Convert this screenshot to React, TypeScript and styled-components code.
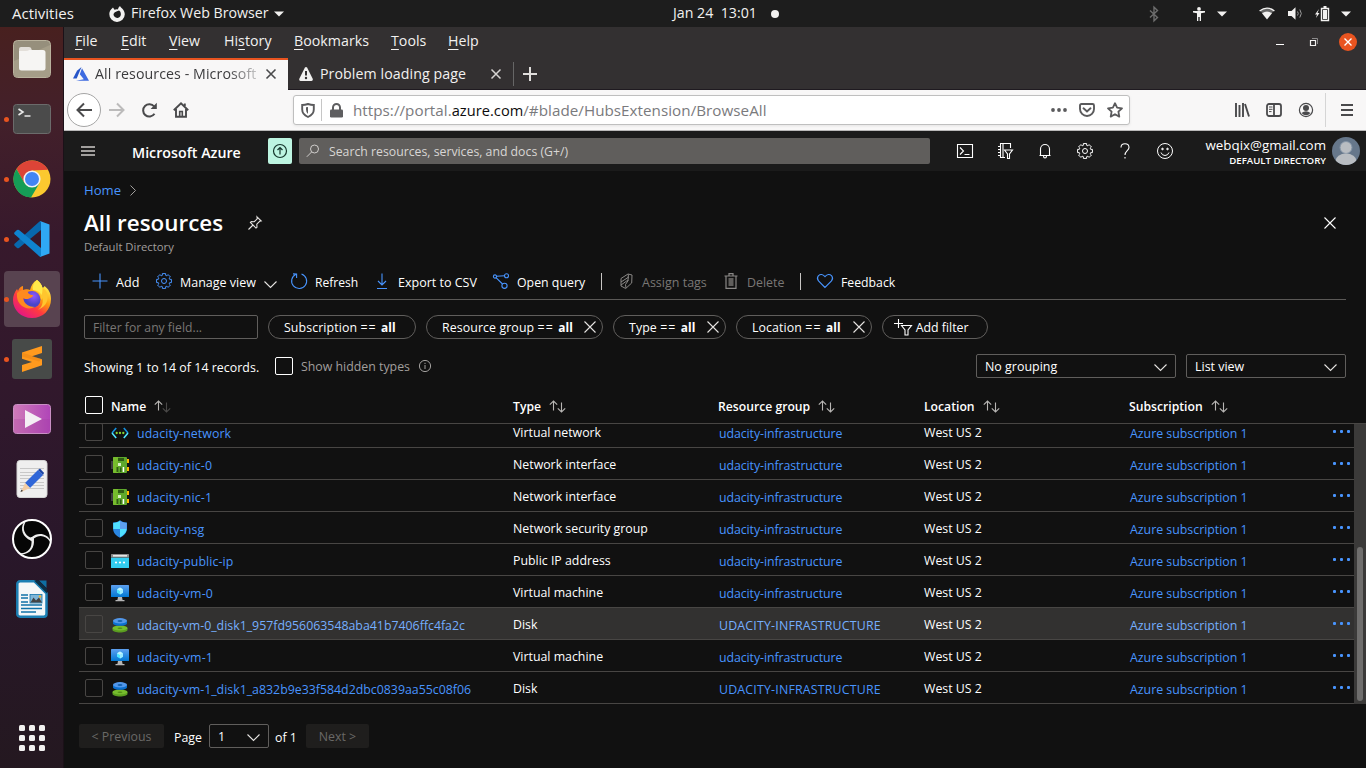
import React from 'react';
import styled, { createGlobalStyle, css } from 'styled-components';

const GlobalStyle = createGlobalStyle`
  * { box-sizing: border-box; }
  body { margin: 0; background: #111; overflow: hidden; }
  svg { display: block; flex: none; overflow: visible; }
`;

const ui = '"Open Sans", "Noto Sans", sans-serif';

const Screen = styled.div`
  width: 1366px; height: 768px; display: flex; flex-direction: column;
  font-family: ${ui}; font-size: 14.2px; color: #f2f1f0; white-space: pre; overflow: hidden;
`;

/* ---------- desktop top bar ---------- */
const TopBar = styled.header`
  height: 27px; flex: none; background: #1d1d1d; display: flex; align-items: center;
`;
const TopLabel = styled.span<{ $left: number; $w: number; $size?: number }>`
  margin-left: ${p => p.$left}px; width: ${p => p.$w}px; font-size: ${p => p.$size ?? 14.2}px;
  line-height: 26px; flex: none; padding-bottom: 1px;
`;
const StatusIcons = styled.div`
  margin-left: auto; display: flex; align-items: center; padding-right: 15px;
`;
const Gap = styled.i<{ $w: number }>`width: ${p => p.$w}px; flex: none;`;
const Dot = styled.i`width: 8px; height: 8px; border-radius: 50%; background: #f2f1f0; margin-left: 14px;`;

const Body = styled.div`flex: 1; display: flex; min-height: 0;`;

/* ---------- dock ---------- */
const Dock = styled.nav`
  width: 64px; flex: none; display: flex; flex-direction: column; padding-top: 2px;
  background: linear-gradient(180deg, #48201f 0%, #43202a 12%, #37192c 28%, #30182c 52%, #29172a 70%, #241820 100%);
  border-right: 1px solid #1b1118;
`;
const Slot = styled.div<{ $active?: boolean }>`
  height: 60px; display: grid; grid-template-columns: 56px; padding: 2px 0 2px 4px; flex: none;
  & > div {
    border-radius: 4px; height: 56px; display: grid; grid-template-columns: 5px 46px; align-items: center;
    ${p => p.$active && css`background: #584350;`}
  }
  svg { justify-self: center; }
`;
const RunDot = styled.i<{ $on?: boolean }>`
  width: 5px; height: 5px; border-radius: 50%; background: ${p => (p.$on ? '#e95420' : 'transparent')};
`;
const AppsButton = styled.div`
  margin: auto 0 17px 19px; display: grid; grid-template-columns: repeat(3, 6px); gap: 4px;
  i { height: 6px; border-radius: 1.5px; background: #f2f1f0; }
`;

/* ---------- browser window ---------- */
const Window = styled.main`flex: 1; min-width: 0; display: flex; flex-direction: column; background: #111;`;
const MenuBar = styled.div`
  height: 31px; flex: none; background: #333031; display: flex; padding: 0 9px 0 11px; line-height: 28px;
`;
const Menu = styled.span<{ $w: number }>`
  width: ${p => p.$w}px; letter-spacing: .03px;
  u { text-underline-offset: 3px; text-decoration-thickness: 1px; }
`;
const WindowButtons = styled.div`margin-left: auto; height: 30px; display: flex; align-items: center;`;
const TabStrip = styled.div`
  height: 32px; flex: none; display: flex; background: #333031; border-bottom: 1px solid #1f1a20;
`;
const Tab = styled.div<{ $active?: boolean }>`
  width: ${p => (p.$active ? 224 : 226)}px; height: 32px; display: flex; align-items: center;
  padding: 0 ${p => (p.$active ? 12 : 13)}px 0 ${p => (p.$active ? 9 : 11)}px; color: #f2f1f0;
  ${p => p.$active && css`background: #f8f7f7; color: #3b3b3d; border-top: 2px solid #e95420; padding-bottom: 2px;`}
`;
const TabTitle = styled.span<{ $fade?: boolean }>`
  flex: 1; margin-left: ${p => (p.$fade ? 6 : 7)}px; overflow: hidden; line-height: 22px; letter-spacing: .08px;
  ${p => p.$fade && css`-webkit-mask-image: linear-gradient(90deg, #000 132px, rgba(0,0,0,.25) 162px);
    mask-image: linear-gradient(90deg, #000 132px, rgba(0,0,0,.25) 162px);`}
`;
const NewTab = styled.div`
  display: flex; align-items: center; padding-left: 9px; margin: 4px 0 3px -1px; border-left: 1px solid #666;
`;
const NavBar = styled.div`
  height: 41px; flex: none; background: #f8f7f7; border-bottom: 1px solid #b9b8b8;
  display: flex; align-items: center; padding-left: 3px;
`;
const BackButton = styled.div`
  width: 34px; height: 34px; border: 1px solid #a5a5a5; border-radius: 50%; background: #fff;
  display: grid; place-items: center;
`;
const UrlBar = styled.div`
  width: 837px; height: 30px; margin-left: 104px; border: 1px solid #bfbfbf; border-radius: 3px; background: #fff;
  display: flex; align-items: center; padding: 0 6px 0 7px; box-shadow: 0 1px 3px rgba(0,0,0,.08);
`;
const UrlDivider = styled.i`width: 1px; height: 22px; background: #c6c6c6; margin: 0 8px 0 6px;`;
const UrlText = styled.span`
  font-size: 15.2px; color: #7a7a7d; flex: 1; margin-left: 10px; line-height: 28px; letter-spacing: .04px;
  b { font-weight: 400; color: #0c0c0d; font-size: 14.6px; }
`;
const NavTools = styled.div`margin-left: 104px; display: flex; align-items: center; height: 100%;`;
const NavRule = styled.i`width: 1px; height: 34px; background: #d5d5d5; margin: 0 15px 0 11px;`;

/* ---------- portal header ---------- */
const Portal = styled.section`
  flex: 1; min-height: 0; display: flex; flex-direction: column; font-size: 12.35px; color: #fff;
`;
const PortalBar = styled.div`
  height: 40px; flex: none; background: #1b1b1b; display: flex; align-items: center; padding-left: 17px;
`;
const Brand = styled.div`
  margin-left: 37px; width: 136px; font-size: 14.25px; font-weight: 600; line-height: 20px; padding-top: 3px;
`;
const Upgrade = styled.div`
  width: 24px; height: 26px; border-radius: 2px; background: #bdf5e1; display: grid; place-items: center;
`;
const SearchBox = styled.div`
  margin-left: 7px; width: 631px; height: 26px; border-radius: 2px; background: #605e5c; color: #d8d6d4;
  display: flex; align-items: center; padding-left: 7px; gap: 9px; font-size: 12.27px;
`;
const Commands = styled.div`
  margin-left: 25px; display: grid; grid-template-columns: repeat(6, 40px); align-items: center;
  svg { justify-self: center; }
  & > div { width: 20px; display: grid; }
`;
const Account = styled.div`
  width: 130px; text-align: right; font-size: 13.35px; line-height: 16px; margin-left: 1px; padding-top: 3px;
  small { display: block; font-size: 9.65px; font-weight: 600; line-height: 16px; }
`;

/* ---------- blade ---------- */
const Blade = styled.div`
  flex: 1; display: flex; flex-direction: column; padding-left: 20px; background: #111;
`;
const Crumbs = styled.div`
  height: 38px; flex: none; display: flex; align-items: center; gap: 9px; font-size: 13.1px; color: #4894fe;
`;
const TitleRow = styled.div`
  height: 28px; flex: none; display: flex; align-items: center; padding-right: 30px; justify-content: space-between;
`;
const Title = styled.h1`
  margin: 0; font-size: 22.4px; font-weight: 600; line-height: 28px; display: flex; align-items: center; gap: 25px;
`;
const Subtitle = styled.div`height: 20px; line-height: 19px; font-size: 11.3px; color: #a19f9d; flex: none;`;
const Toolbar = styled.div`
  margin: 8px 20px 0 0; height: 35px; flex: none; border-bottom: 1px solid #5b5957; padding-left: 8px;
  display: flex; align-items: center;
`;
const Tool = styled.div<{ $w: number; $off?: boolean; $size?: number }>`
  width: ${p => p.$w}px; display: grid; grid-template-columns: 16px auto auto; gap: 8px; justify-content: start;
  align-items: center; font-size: ${p => p.$size ?? 12.4}px; color: ${p => (p.$off ? '#797775' : '#fff')};
  line-height: 20px; padding-top: 1px;
  svg { justify-self: center; margin-top: -3px; }
  svg:not(:first-child) { margin-top: 3px; }
`;
const ToolRule = styled.i`width: 1px; height: 17px; background: #c8c6c4; margin-top: -2px;`;

const Filters = styled.div`margin-top: 15px; height: 24px; flex: none; display: flex; gap: 10px;`;
const FilterInput = styled.div`
  width: 174px; border: 1px solid #605e5c; border-radius: 2px; padding-left: 8px; line-height: 23px; color: #797775;
  font-size: 12.2px;
`;
const Pill = styled.div<{ $w: number; $pad?: number }>`
  width: ${p => p.$w}px; border: 1px solid #605e5c; border-radius: 12px; display: flex; align-items: center;
  padding: 0 6px 0 ${p => p.$pad ?? 15}px; line-height: 23px; justify-content: space-between;
  b { font-weight: 700; font-size: 11.9px; }
  span { letter-spacing: .1px; }
  em { font-style: normal; letter-spacing: 1.1px; }
`;
const Summary = styled.div`
  margin-top: 15px; height: 24px; flex: none; display: flex; align-items: center; padding-right: 20px;
`;
const Count = styled.span`width: 191px; padding-top: 2px; letter-spacing: .05px;`;
const Checkbox = styled.i<{ $dim?: boolean }>`
  width: 18px; height: 18px; border: 1px solid ${p => (p.$dim ? '#484644' : '#fff')}; border-radius: 2px; display: block;
`;
const Hidden = styled.span`margin: 0 9px 0 8px; color: #a19f9d;`;
const Select = styled.div<{ $w: number }>`
  width: ${p => p.$w}px; height: 24px; border: 1px solid #605e5c; border-radius: 2px; padding: 2px 8px 0;
  display: flex; justify-content: space-between; align-items: center; line-height: 24px; font-size: 12.45px;
`;
const SelectGroup = styled.div`margin-left: auto; display: flex; gap: 10px;`;

const Table = styled.div`margin: 11px 0 0 -5px; flex: none;`;
const HeadRow = styled.div`
  display: grid; grid-template-columns: 26px 402px 205px 206px 205px 1fr;
  height: 35px; border-bottom: 1px solid #484644; padding-left: 6px; align-items: center;
  font-weight: 600; font-size: 12.2px;
  & > i { margin-top: -3px; }
`;
const HeadCell = styled.div`
  display: flex; align-items: center; gap: 8px; line-height: 20px; padding-top: 1px;
`;
const Scroller = styled.div`height: 280px; display: flex; overflow: hidden;`;
const Rows = styled.div`width: 1275px; display: flex; flex-direction: column; justify-content: flex-end;`;
const Row = styled.div<{ $hover?: boolean }>`
  display: grid; grid-template-columns: 26px 402px 206px 205px 206px 202px 1fr;
  height: 32px; flex: none; border-bottom: 1px solid #484644; padding-left: 6px; align-items: center;
  background: ${p => (p.$hover ? '#323130' : '#111')};
`;
const Cell = styled.span`line-height: 20px; padding-top: 2px;`;
const Link = styled.span<{ $hover?: boolean; $sp?: number }>`
  color: ${p => (p.$hover ? '#75aefe' : '#4894fe')}; line-height: 20px; padding-top: 4px;
  letter-spacing: ${p => p.$sp ?? 0}px;
`;
const NameCell = styled.div`
  display: flex; align-items: center; gap: 8px;
  svg { margin-top: 2px; }
`;
const More = styled.div`
  display: flex; gap: 4px; padding-left: 1px;
  i { width: 3px; height: 3px; border-radius: 1px; background: #4894fe; }
`;
const Track = styled.div`width: 12px; background: #3b3a39; padding: 123px 3px 3px;`;
const Thumb = styled.div`height: 154px; border-radius: 3px; background: #6f6e6d;`;

const Pager = styled.div`
  margin: 20px 0 0 -5px; height: 24px; display: flex; align-items: stretch; line-height: 25px;
`;
const PageButton = styled.div<{ $w: number }>`
  width: ${p => p.$w}px; background: #1f1e1d; color: #6a6967; border-radius: 2px; text-align: center; line-height: 25px;
`;
const PageLabel = styled.span<{ $w: number; $left: number }>`
  width: ${p => p.$w}px; padding-left: ${p => p.$left}px; padding-top: 1px;
`;

/* ---------- icons ---------- */
type SvgProps = { w?: number; h?: number; c?: string; s?: number; children: React.ReactNode };
const Line = ({ w = 16, h = 16, c = '#fff', s = 1, children }: SvgProps) => (
  <svg width={w} height={h} viewBox={`0 0 ${w} ${h}`} fill="none" stroke={c} strokeWidth={s}>{children}</svg>
);
const Solid = ({ w = 16, h = 16, c = '#f2f1f0', children }: SvgProps) => (
  <svg width={w} height={h} viewBox={`0 0 ${w} ${h}`} fill={c}>{children}</svg>
);
const Caret = () => <Solid w={10} h={6}><path d="M0 .5h10L5 5.5z" /></Solid>;
const Chevron = () => <Line w={13} h={7} c="#e6e4e2" s={1.1}><path d="M.5.5l6 6 6-6" /></Line>;
const Cross = ({ n = 12, c = '#fff', s = 1.1 }) => <Line w={n} h={n} c={c} s={s}><path d={`M.5.5L${n - .5} ${n - .5}M${n - .5}.5L.5 ${n - .5}`} /></Line>;
const Sort = ({ dim }: { dim?: boolean }) => (
  <Line w={17} h={13} c="#b8b6b4" s={1.1}>
    <path d="M4.5 10.5V1M.8 4.6L4.5 1l3.7 3.6" />
    <path stroke={dim ? '#4a4948' : undefined} d="M12.500 2.500V12M8.800 8.400l3.700 3.600 3.700-3.600" />
  </Line>
);
const gearPath = (() => {
  const pts: string[] = [];
  for (let i = 0; i < 8; i++) {
    const a = (i * Math.PI) / 4;
    const at = (r: number, d: number) => `${(8 + r * Math.cos(a + d)).toFixed(2)} ${(8 + r * Math.sin(a + d)).toFixed(2)}`;
    pts.push(`${i ? 'L' : 'M'}${at(5.9, -0.28)}L${at(7.6, -0.22)}L${at(7.6, 0.22)}L${at(5.9, 0.28)}`);
  }
  return pts.join('') + 'Z';
})();
const Gear = ({ c = '#fff' }) => <Line c={c}><path d={gearPath} /><circle cx="8" cy="8" r="2.5" /></Line>;

const BLUE = '#4894fe';

const FilesIcon = () => (
  <svg width="38" height="38" viewBox="0 0 38 38"><rect x=".5" y=".5" width="37" height="37" rx="4" fill="#968f7c" stroke="#b9b29d" />
    <path d="M1 21L37 5v29a3 3 0 01-3 3H4a3 3 0 01-3-3z" fill="#a59d88" />
    <path d="M6 12V9q0-2 2-2h8q2 0 2.500 2l.5 2z" fill="#e3dfd9" /><path d="M6 11h7q2 0 3.500-1.200L17 10h13q2.500 0 2.500 2.500V28q0 2.500-2.500 2.500H8.500Q6 30.500 6 28z" fill="#f6f5f3" /></svg>
);
const TerminalIcon = () => (
  <svg width="38" height="30" viewBox="0 0 38 30"><rect x=".5" y=".5" width="37" height="29" rx="3" fill="#4b4b4b" stroke="#6b6b6b" />
    <path d="M5.500 5l4.500 3-4.500 3M11.500 12h6" fill="none" stroke="#e8e8e8" strokeWidth="1.600" /></svg>
);
const ChromeIcon = () => (
  <svg width="38" height="38" viewBox="-19 -19 38 38">
    <circle r="18.500" fill="#fbc92f" />
    <path d="M-15.500-10.100A18.500 18.500 0 0116-9.300L0-8.500-7.500 4.300z" fill="#dd4437" />
    <path d="M-15.500-10.100L-7.400 4.200 7.400 4.200-1 18.500A18.500 18.500 0 01-15.500-10.100z" fill="#159d57" />
    <circle r="8.600" fill="#f4f4f4" /><circle r="7" fill="#4285f4" />
  </svg>
);
const CodeIcon = () => (
  <svg width="36" height="36" viewBox="0 0 36 36">
    <path d="M27 0v9L5 27q-1 .6-2 0L.6 24.800q-1-1 0-2L25.500.6z" fill="#0868ad" />
    <path d="M27 36v-9L5 9q-1-.6-2 0L.6 11.200q-1 1 0 2L25.500 35.400z" fill="#0f83cf" />
    <path d="M26 0l9.500 3.500v29L26 36q1-.5 1-2V2q0-1.500-1-2z" fill="#2fa8f4" />
  </svg>
);
const FirefoxIcon = () => (
  <svg width="38" height="38" viewBox="0 0 38 38">
    <defs>
      <linearGradient id="fx" x1=".85" y1=".05" x2=".2" y2=".95"><stop offset=".05" stopColor="#fff44f" /><stop offset=".4" stopColor="#ff980e" /><stop offset=".65" stopColor="#ff3b3f" /><stop offset="1" stopColor="#e31587" /></linearGradient>
      <radialGradient id="fg" cx=".6" cy=".3"><stop offset="0" stopColor="#9059ff" /><stop offset="1" stopColor="#4a45c8" /></radialGradient>
    </defs>
    <path d="M24 0c3 2 5 5 5.500 8 1-.5 1.500-1 2-2 4 3 6.500 7 6.500 13 0 11-8 19-19 19S0 30 0 20c0-4 1.500-8 4-11l1 2C6 8 8 6.500 10 6v4c3-1 5-1 7 0 1-4 3-8 7-10z" fill="url(#fx)" />
    <circle cx="19" cy="19.500" r="8.500" fill="url(#fg)" />
    <path d="M4 13c3-3 7-4 11-3-1 1 0 3 1 4 1 .5 2 1 4 1 0 3-4 3-5 4-2 0-4 0-5-1 1 6 6 9 12 9-8 4-17-1-18-10z" fill="#ff8a1f" />
    <path d="M24 0c-3 3-5 6-4 10 5 1 8 4 8 10 2-1 1-3 1-3 2 5 0 10-4 13 9-4 11-11 9-17-1-3-3-4-4.500-5C28 5 26 2 24 0z" fill="#ffc62e" />
    <path d="M24 0c-3 3-5 6-4 10 4 .5 7 2 8.500 5 1-3 1-5 1-7-.5-3-2.500-6-5.500-8z" fill="#ffe94a" />
  </svg>
);
const SublimeIcon = () => (
  <svg width="40" height="40" viewBox="0 0 40 40"><rect width="40" height="40" rx="3" fill="#474a48" />
    <path d="M10 13.500L30 7v7l-10 3.300 10 3v6L10 33v-7l10-3-10-3.300z" fill="#ff9a1e" /><path d="M10 13.500l20 6.800-3 2.300-17-5z" fill="#dd7a10" opacity=".35" /></svg>
);
const VideoIcon = () => (
  <svg width="38" height="30" viewBox="0 0 38 30"><defs><linearGradient id="vd" x2="1"><stop stopColor="#cf7bb9" /><stop offset="1" stopColor="#b045b8" /></linearGradient></defs>
    <rect x=".5" y=".5" width="37" height="29" rx="3" fill="url(#vd)" stroke="#c98fc4" /><path d="M1 15h36v14H1z" fill="#a03c9d" opacity=".25" />
    <path d="M12 6l17 9-17 9z" fill="#f4eef4" /></svg>
);
const EditorIcon = () => (
  <svg width="32" height="38" viewBox="0 0 32 38"><rect x="1" y=".5" width="30" height="37" rx="3" fill="#efefef" stroke="#d4d4d4" />
    <path d="M4 8.500h24M4 12.500h24M4 15.500h24M4 18.500h24M4 22.500h24M4 25.500h24M4 28.500h24" stroke="#c8c8c8" />
    <path d="M9 23L22 10l5 5-13 13z" fill="#2f66d8" /><path d="M22 10l2-1.500L28 13l-1 2z" fill="#1c45a4" /><path d="M9 23l5 5-9 4z" fill="#f2cda4" /><path d="M4.500 32l1-2.500 1.500 1.500z" fill="#333" /></svg>
);
const ObsIcon = () => (
  <svg width="40" height="40" viewBox="-20 -20 40 40"><circle r="19" fill="#060606" stroke="#fff" strokeWidth="2" />
    {[0, 120, 240].map(r => (
      <path key={r} transform={`rotate(${r})`} d="M-.5-1C-8-4-10-10.500-6.500-17L-8-17C-12.500-10-9-1.500-1 1.500Q.5 1.500 1 0z" fill="#efefef" />
    ))}
    <circle r="2" fill="#efefef" />
  </svg>
);
const WriterIcon = () => (
  <svg width="32" height="38" viewBox="0 0 32 38"><path d="M4 1.300h14.500l12 12V34a2.700 2.700 0 01-2.700 2.700H4A2.700 2.700 0 011.300 34V4A2.700 2.700 0 014 1.300z" fill="#f5f7f8" stroke="#1c7fb3" strokeWidth="2.500" />
    <path d="M23 .500h7.500V8z" fill="#0e6fa3" /><path d="M18 .5L31 13.500V9L22.500.5z" fill="#0c2f45" />
    <path d="M5 15h7M5 18h7M5 22h7M5 25h21M5 28.500h21M5 32h15" stroke="#1273a8" strokeWidth="1.500" />
    <rect x="14" y="14.500" width="12" height="8.500" fill="#7fb6d8" stroke="#1273a8" strokeWidth=".8" /><path d="M14.500 22.500l3-5 2.500 3 3-3 3 5z" fill="#444" /><circle cx="24" cy="16.500" r="1.200" fill="#f3b431" /></svg>
);

const NetworkIcon = () => (
  <svg width="18" height="18" viewBox="0 0 18 18"><path d="M5.200 4L1 9M12.800 4L17 9" fill="none" stroke="#1490df" strokeWidth="1.600" /><path d="M1 9l4.200 5M17 9l-4.200 5" fill="none" stroke="#50e6ff" strokeWidth="1.600" />
    <circle cx="5.700" cy="9" r="1.150" fill="#86d633" /><circle cx="9" cy="9" r="1.150" fill="#86d633" /><circle cx="12.300" cy="9" r="1.150" fill="#86d633" /></svg>
);
const NicIcon = () => (
  <svg width="18" height="18" viewBox="0 0 18 18"><path d="M0 5h2v8H0z" fill="#3e3e3e" /><rect x="2" y="1" width="14" height="16" rx="1" fill="#5ea82c" /><path d="M2 2q0-1 1-1h4v16H3q-1 0-1-1z" fill="#76bc2d" />
    <path d="M7 2h6v3H7zM5.500 11h1.800v5H5.500zM9 11.500h1.500V16H9z" fill="#2f5d13" /><path d="M7 7h3v3H7z" fill="#d9efc4" /><path d="M11.700 11h1.500v5h-1.500z" fill="#fff" /><path d="M16 3h2v4h-2zM16 11h2v4h-2z" fill="#ffb900" /></svg>
);
const ShieldIcon = () => (
  <svg width="18" height="18" viewBox="0 0 18 18"><path d="M9 .2c2 1.600 4 2.100 7 2.200V8.500c0 4.500-3.600 7.500-7 9.300-3.400-1.800-7-4.800-7-9.300V2.400C5 2.300 7 1.800 9 .2z" fill="#2a86e2" />
    <path d="M9 .8V9H2.300V2.900C5.200 2.800 7 2.300 9 .8zM9 9h6.700c-.2 3.700-3.500 6.500-6.700 8.200z" fill="#50e0ff" /><path d="M9 .8V9h6.700V2.900C12.800 2.800 11 2.300 9 .8z" fill="#5ea0ef" /></svg>
);
const PublicIpIcon = () => (
  <svg width="18" height="14" viewBox="0 0 18 14"><path d="M0 3.500h18V13.500q0 .5-.5.5H.5q-.5 0-.5-.5z" fill="#32cdf0" /><path d="M0 .5Q0 0 .5 0h17q.5 0 .5.500v3H0z" fill="#8a8a8a" /><rect x="2" y="1" width="14" height="1.600" fill="#e6e6e6" />
    <circle cx="5" cy="8.500" r="1.100" fill="#fff" /><circle cx="9" cy="8.500" r="1.100" fill="#fff" /><circle cx="13" cy="8.500" r="1.100" fill="#fff" /></svg>
);
const VmIcon = () => (
  <svg width="18" height="18" viewBox="0 0 18 18"><defs><linearGradient id="vm" x2="0" y2="1"><stop stopColor="#5ea0ef" /><stop offset="1" stopColor="#0078d4" /></linearGradient></defs>
    <rect y="1" width="18" height="12" rx=".6" fill="url(#vm)" /><path d="M9 3.500l3 1.700v3.500l-3 1.800-3-1.800V5.200z" fill="#50e6ff" /><path d="M9 3.500l3 1.700L9 7 6 5.200z" fill="#c3f1ff" /><path d="M9 7l3-1.800v3.500l-3 1.800z" fill="#9cebff" />
    <path d="M7 13h4l.6 3H13.500v1.200h-9V16h1.900z" fill="#b5b5b5" /></svg>
);
const DiskIcon = () => (
  <svg width="18" height="18" viewBox="0 0 18 18"><path d="M1.500 12v2c0 1.300 3.500 2.500 7.500 2.500s7.500-1.200 7.500-2.500V12z" fill="#5a9c20" /><ellipse cx="9" cy="12" rx="7.500" ry="2.600" fill="#76bc2d" /><ellipse cx="9" cy="12.300" rx="2.500" ry=".8" fill="#4f8a16" />
    <path d="M2 5v2.200C2 8.600 5 9.800 9 9.800s7-1.200 7-2.600V5z" fill="#0a6fce" /><ellipse cx="9" cy="4.800" rx="7" ry="2.700" fill="#5297ea" /><ellipse cx="9" cy="5" rx="2.500" ry=".9" fill="#1461ae" /></svg>
);

/* ---------- data ---------- */
const dockApps: [() => React.ReactElement, boolean, boolean?][] = [
  [FilesIcon, false], [TerminalIcon, true], [ChromeIcon, true], [CodeIcon, true], [FirefoxIcon, true, true],
  [SublimeIcon, true], [VideoIcon, false], [EditorIcon, false], [ObsIcon, false], [WriterIcon, false],
];
const menus: [string, string, string, number][] = [
  ['', 'F', 'ile', 46], ['', 'E', 'dit', 48], ['', 'V', 'iew', 55], ['Hi', 's', 'tory', 70],
  ['', 'B', 'ookmarks', 97], ['', 'T', 'ools', 57], ['', 'H', 'elp', 60],
];
type Res = { icon: () => React.ReactElement; name: string; type: string; group?: string; hover?: boolean };
const resources: Res[] = [
  { icon: NetworkIcon, name: 'udacity-network', type: 'Virtual network' },
  { icon: NicIcon, name: 'udacity-nic-0', type: 'Network interface' },
  { icon: NicIcon, name: 'udacity-nic-1', type: 'Network interface' },
  { icon: ShieldIcon, name: 'udacity-nsg', type: 'Network security group' },
  { icon: PublicIpIcon, name: 'udacity-public-ip', type: 'Public IP address' },
  { icon: VmIcon, name: 'udacity-vm-0', type: 'Virtual machine' },
  { icon: DiskIcon, name: 'udacity-vm-0_disk1_957fd956063548aba41b7406ffc4fa2c', type: 'Disk', group: 'UDACITY-INFRASTRUCTURE', hover: true },
  { icon: VmIcon, name: 'udacity-vm-1', type: 'Virtual machine' },
  { icon: DiskIcon, name: 'udacity-vm-1_disk1_a832b9e33f584d2dbc0839aa55c08f06', type: 'Disk', group: 'UDACITY-INFRASTRUCTURE' },
];
const pills: [string, number, boolean][] = [['Subscription', 148, false], ['Resource group', 177, true], ['Type', 113, true], ['Location', 136, true]];

export default function App() {
  return (
    <Screen>
      <GlobalStyle />
      <TopBar>
        <TopLabel $left={12} $w={97} $size={15}>Activities</TopLabel>
        <Solid w={16} h={16}><path fillRule="evenodd" d="M4 1.500l1.500 2.300C7 3 8 3 9 3.400 9 2 10 .8 11 0c.3 1.500 4.500 3 4.800 8.300A7.700 7.700 0 01.3 8C.3 5.500 1.800 3.500 2.500 3zM8 5.200L5.800 6.300 4.500 8a3.700 3.700 0 107.300-.6C11.500 6 11 5 10 4.600z" /></Solid>
        <TopLabel $left={6} $w={143}>Firefox Web Browser</TopLabel>
        <Caret />
        <TopLabel $left={389} $w={84}>Jan 24  13:01</TopLabel>
        <Dot />
        <StatusIcons>
          <Line w={10} h={16} c="#6d6d6d" s={1.4}><path d="M1 4.500l7.500 7L5 14.800V1.200l3.500 3.300-7.500 7" /></Line>
          <Gap $w={34} />
          <Solid w={12} h={14}><circle cx="6" cy="1.900" r="1.900" /><path d="M0 4h12v1.500L8 6.300V14H6.700v-4H5.300v4H4V6.300L0 5.500z" /></Solid>
          <Gap $w={12} /><Caret /><Gap $w={32} />
          <Solid w={16} h={13}><path d="M8 12.500L3 6.200q5-3.400 10 0z" /><path d="M.6 4Q8-1.800 15.400 4" fill="none" stroke="#f2f1f0" strokeWidth="1.400" /><path d="M1 3.500l2.500 3q4.500-3.500 9 0l2.500-3Q8-1.500 1 3.500z" opacity=".35" /></Solid>
          <Gap $w={13} />
          <Solid w={15} h={13}><path d="M0 4h3.500L7.500.3v12.400L3.500 9H0z" /><path d="M9.500 4.500q1.500 2 0 4M11.800 2.500q3 4 0 8" fill="none" stroke="#9a9a9a" /></Solid>
          <Gap $w={12} />
          <Solid w={15} h={15}><path d="M4 3L0 8.500h2L1 12l3.500-5h-2z" /><path d="M6.500 2.500h7v12h-7z" fill="none" stroke="#f2f1f0" strokeWidth="1.400" /><path d="M8 4h4v9H8zM8.500 0h3v2h-3z" /></Solid>
          <Gap $w={11} /><Caret />
        </StatusIcons>
      </TopBar>
      <Body>
        <Dock>
          {dockApps.map(([Icon, on, active], i) => (
            <Slot key={i} $active={active}><div><RunDot $on={on} /><Icon /></div></Slot>
          ))}
          <AppsButton>{Array.from({ length: 9 }, (_, i) => <i key={i} />)}</AppsButton>
        </Dock>
        <Window>
          <MenuBar>
            {menus.map(([a, u, b, w]) => <Menu key={b} $w={w}>{a}<u>{u}</u>{b}</Menu>)}
            <WindowButtons>
              <Line w={8} h={8} s={1}><path d="M0 6.500h8" /></Line><Gap $w={26} />
              <Line w={8} h={8} c="#f2f1f0"><path d="M.5 2.500h5v5h-5z" strokeWidth="1.200" /><path d="M2 .5h5.500V6" stroke="#8d8b8c" /></Line><Gap $w={21} />
              <svg width="18" height="18" viewBox="0 0 18 18"><circle cx="9" cy="9" r="9" fill="#e95420" /><path d="M5.500 5.500l7 7m0-7l-7 7" stroke="#fff" strokeWidth="1.400" /></svg>
            </WindowButtons>
          </MenuBar>
          <TabStrip>
            <Tab $active>
              <svg width="16" height="14" viewBox="0 0 16 14"><path d="M8.500 0L4 3.800 0 11.500h3.700z" fill="#2755c8" /><path d="M9 1.200L6.800 7.200l4 5-7.800 1.500H16z" fill="#3d6ae0" /></svg>
              <TabTitle $fade>All resources - Microsoft</TabTitle><Gap $w={7} />
              <Cross n={10} c="#4a4a4c" s={1.6} />
            </Tab>
            <Tab>
              <svg width="14" height="14" viewBox="0 0 14 14"><path d="M5.800.8q1.200-1.500 2.400 0L13.800 12q.5 1.600-1.200 2H1.400Q-.3 13.600.2 12z" fill="#f2f1f0" /><path d="M7 4v4.500" stroke="#333031" strokeWidth="2" /><circle cx="7" cy="11" r="1.200" fill="#333031" /></svg>
              <TabTitle>Problem loading page</TabTitle>
              <Cross n={10} c="#d6d4d2" s={1.5} />
            </Tab>
            <NewTab><Line w={14} h={14} c="#e0dedc" s={2}><path d="M7 0v14M0 7h14" /></Line></NewTab>
          </TabStrip>
          <NavBar>
            <BackButton><Line c="#4a4a4c" s={2}><path d="M8 1.500L1.500 8 8 14.500M1.500 8H16" /></Line></BackButton>
            <Gap $w={8} />
            <Line c="#bcbbbb" s={2}><path d="M8 1.500L14.500 8 8 14.500M14.500 8H0" /></Line>
            <Gap $w={16} />
            <Line c="#4a4a4c" s={2}><path d="M13.500 11.800A6.200 6.200 0 1113.200 4.500" /><path d="M15.800.8V7H9.600z" fill="#4a4a4c" stroke="none" /></Line>
            <Gap $w={16} />
            <Line c="#4a4a4c" s={1.9}><path d="M.8 8.200L8 1.300l7.200 6.900M3 7v7.800h10V7M11.800 1.500V4" /><path d="M6.700 15V9.500h2.600V15" strokeWidth="1.600" /></Line>
            <UrlBar>
              <Line w={14} h={15} c="#5a5a5c" s={1.9}><path d="M1.200 2Q4 2 7 1q3 1 5.800 1v4.500q0 5-5.800 7.500-5.800-2.500-5.800-7.500z" /><path d="M5 4.300l2-.4v7Q5 9.500 5 6.500z" fill="#5a5a5c" stroke="none" /></Line>
              <UrlDivider />
              <Solid w={13} h={15} c="#5e5e60"><rect y="6.500" width="13" height="8" rx="1.200" /><path d="M3 7V4.500a3.500 3.500 0 017 0V7" fill="none" stroke="#5e5e60" strokeWidth="2" /></Solid>
              <UrlText>https://portal.<b>azure.com</b>/#blade/HubsExtension/BrowseAll</UrlText>
              <Solid w={16} h={4} c="#5a5a5c"><circle cx="2" cy="2" r="1.900" /><circle cx="8" cy="2" r="1.900" /><circle cx="14" cy="2" r="1.900" /></Solid>
              <Gap $w={12} />
              <Line w={16} h={14} c="#5a5a5c" s={1.9}><path d="M2.500 1h11q1.500 0 1.500 1.500V6a7 7 0 01-14 0V2.500Q1 1 2.500 1z" /><path d="M4.500 5.300L8 8.500l3.500-3.200" strokeLinecap="round" /></Line>
              <Gap $w={12} />
              <Line c="#5a5a5c" s={1.8}><path strokeLinejoin="round" d="M8 1.200l2.100 4.500 4.900.6-3.600 3.400.9 4.900L8 12.200l-4.300 2.400.9-4.900L1 6.300l4.900-.6z" /></Line>
            </UrlBar>
            <NavTools>
              <Line c="#4a4a4c" s={1.9}><path d="M2 1v14M5.500 3v12M9 1v14M11 2l4 12.500" /></Line><Gap $w={16} />
              <Line w={16} h={14} c="#4a4a4c" s={1.8}><rect x="1" y="1" width="14" height="12" rx="2" /><path d="M8 1v12" /><path d="M3 4h3.500M3 6.300h3.500M3 8.600h2.500" strokeWidth="1" /></Line><Gap $w={16} />
              <Line c="#4a4a4c" s={1.2} ><circle cx="8" cy="8" r="6.600" /><circle cx="8" cy="6" r="3" fill="#4a4a4c" stroke="none" /><path d="M3.500 11Q8 7.500 12.500 11 10.500 13.300 8 13.300T3.500 11z" fill="#4a4a4c" stroke="none" /></Line>
              <NavRule />
              <Line w={12} h={12} c="#4a4a4c" s={2}><path d="M0 1h12M0 6h12M0 11h12" /></Line>
            </NavTools>
          </NavBar>
          <Portal>
            <PortalBar>
              <Line w={14} h={10} c="#a19f9d" s={2}><path d="M0 1h14M0 5h14M0 9h14" /></Line>
              <Brand>Microsoft Azure</Brand>
              <Upgrade><Line w={14} h={14} c="#14352a" s={1.2}><circle cx="7" cy="7" r="6.500" /><path d="M7 10.500v-7M4.500 6L7 3.500 9.500 6" /></Line></Upgrade>
              <SearchBox>
                <Line w={14} h={14} c="#d0cecc"><circle cx="8.500" cy="5" r="4" /><path d="M5.700 7.900L.8 12.800" /></Line>
                Search resources, services, and docs (G+/)
              </SearchBox>
              <Commands>
                <div><Line w={16} h={14} s={1.1}><path d="M.5.5h15v13H.5zM3 3.500L6.500 7 3 10.500M7.500 10.500h5" /></Line></div>
                <div><Line s={1.1}><path d="M13.500 5V.5h-10v14H8M6 .5v14M3.500 3.500H1M3.500 6.500H1M3.500 9.500H1M3.500 12.500H1" /><path d="M7.500 7h8l-3 4v4.500h-2V11z" /></Line></div>
                <div><Line w={12} h={16} s={1.1}><path d="M.5 12.500h11M1.500 12.500V6a4.500 4.500 0 019 0v6.500M4.500 13q0 2 1.500 2t1.500-2" /></Line></div>
                <div><Gear /></div>
                <div><Line w={10} h={16} s={1.1}><path d="M1 4.500Q1 .7 5 .7T9 4.500C9 7.500 5 8 5 12M5 14v1.500" /></Line></div>
                <div><Line><circle cx="8" cy="8" r="7.500" /><path d="M4 9.500q1 3 4 3t4-3" /><circle cx="5.500" cy="6" r=".8" fill="#fff" /><circle cx="10.500" cy="6" r=".8" fill="#fff" /></Line></div>
              </Commands>
              <Account>webqix@gmail.com<small>DEFAULT DIRECTORY</small></Account>
              <Gap $w={6} />
              <svg width="28" height="28" viewBox="0 0 28 28"><defs><clipPath id="av"><circle cx="14" cy="14" r="14" /></clipPath></defs><g clipPath="url(#av)"><rect width="28" height="28" fill="#66778b" /><circle cx="14" cy="10.500" r="6" fill="#b9bdc2" stroke="#8494a6" /><ellipse cx="14" cy="24" rx="10.500" ry="7.500" fill="#b9bdc2" /></g></svg>
            </PortalBar>
            <Blade>
              <Crumbs><span>Home</span><Line w={6} h={11} c="#a19f9d"><path d="M.5.5l5 5-5 5" /></Line></Crumbs>
              <TitleRow>
                <Title>All resources<Line w={14} h={14} c="#e6e4e2" s={1.1}><path d="M9 .8L13.200 5l-1.500.3-2.900 2.900.2 3-1 .9-5.600-5.600.9-1 3 .2 2.900-2.900zM5 9L.5 13.500" /></Line></Title>
                <Cross n={12} />
              </TitleRow>
              <Subtitle>Default Directory</Subtitle>
              <Toolbar>
                <Tool $w={64} $size={12.6}><Line c={BLUE} s={1.1}><path d="M8 .5v15M.5 8h15" /></Line>Add</Tool>
                <Tool $w={135} $size={12.5}><Gear c={BLUE} />Manage view<Chevron /></Tool>
                <Tool $w={83} $size={12.1}><Line c={BLUE} s={1.1}><path d="M10.500.9A7.500 7.500 0 115 1.200M2 .9l3.600.2L5.600 5" /></Line>Refresh</Tool>
                <Tool $w={119} $size={12.5}><Line c={BLUE} s={1.1}><path d="M8 .5v11M4 8l4 4 4-4M3 15.500h10" /></Line>Export to CSV</Tool>
                <Tool $w={108} $size={12.35}><Line c={BLUE} s={1.1}><circle cx="2" cy="3.500" r="1.600" /><circle cx="13.500" cy="2.700" r="2" /><circle cx="11.500" cy="12.800" r="2.600" /><path d="M3.600 3.300l7.900-.5M3 4.700l6.500 6.300" /></Line>Open query</Tool>
                <ToolRule /><Gap $w={16} />
                <Tool $w={105} $off $size={12.5}><Line c="#8a8886"><path d="M3 5.500L10 1l4 1-.3 8-6 5.500L3 13zM3 9l7-4.500.5-3M3 12l7-5 .5-3.500M8 15l-.5-3.500 3-4.500" /></Line>Assign tags</Tool>
                <Tool $w={77} $off><Line c="#8a8886" s={1.2}><path d="M1.500 3h13M6 2.500V.7h4v1.800M3 3v12.300h10V3" /><path d="M5.500 5h5v8h-5z" fill="#605e5c" stroke="none" /></Line>Delete</Tool>
                <ToolRule /><Gap $w={16} />
                <Tool $w={80} $size={12.25}><Line c={BLUE} s={1.1}><path d="M8 14.500L1.500 8Q-.6 5.300 1.300 2.800 4.500-.2 8 3.600 11.500-.2 14.700 2.800 16.600 5.300 14.500 8z" /></Line>Feedback</Tool>
              </Toolbar>
              <Filters>
                <FilterInput>Filter for any field...</FilterInput>
                {pills.map(([label, w, close]) => (
                  <Pill key={label} $w={w}><span>{label} <em>== </em><b>all</b></span>{close && <Cross n={12} c="#e6e4e2" />}</Pill>
                ))}
                <Pill $w={106} $pad={11}>
                  <Line w={18} h={17} s={1.1}><path d="M4.500 0v9M0 4.500h9" /><path d="M7.500 6.500h10l-3.500 4.500v5h-3v-5z" /></Line>
                  <Gap $w={3} />Add filter<Gap $w={12} />
                </Pill>
              </Filters>
              <Summary>
                <Count>Showing 1 to 14 of 14 records.</Count>
                <Checkbox /><Hidden>Show hidden types</Hidden>
                <Line w={12} h={12} c="#a19f9d"><circle cx="6" cy="6" r="5.600" /><path d="M6 5v4M6 2.800V4" /></Line>
                <SelectGroup><Select $w={200}>No grouping<Chevron /></Select><Select $w={160}>List view<Chevron /></Select></SelectGroup>
              </Summary>
              <Table>
                <HeadRow>
                  <Checkbox />
                  <HeadCell>Name<Sort dim /></HeadCell>
                  <HeadCell>Type<Sort /></HeadCell>
                  <HeadCell>Resource group<Sort /></HeadCell>
                  <HeadCell>Location<Sort /></HeadCell>
                  <HeadCell>Subscription<Sort /></HeadCell>
                </HeadRow>
                <Scroller>
                  <Rows>
                    {resources.map(({ icon: Icon, name, type, group, hover }) => (
                      <Row key={name} $hover={hover}>
                        <Checkbox $dim />
                        <NameCell><Icon /><Link $hover={hover} $sp={name.length > 20 ? 0 : name.length < 15 ? 0.15 : 0.08}>{name}</Link></NameCell>
                        <Cell>{type}</Cell>
                        <Link $hover={hover} $sp={group ? 0.2 : -0.08}>{group ?? 'udacity-infrastructure'}</Link>
                        <Cell>West US 2</Cell>
                        <Link $hover={hover}>Azure subscription 1</Link>
                        <More><i /><i /><i /></More>
                      </Row>
                    ))}
                  </Rows>
                  <Track><Thumb /></Track>
                </Scroller>
              </Table>
              <Pager>
                <PageButton $w={85}>&lt; Previous</PageButton>
                <PageLabel $w={45} $left={10}>Page</PageLabel>
                <Select $w={60}>1<Chevron /></Select>
                <PageLabel $w={37} $left={6}>of 1</PageLabel>
                <PageButton $w={63}>Next &gt;</PageButton>
              </Pager>
            </Blade>
          </Portal>
        </Window>
      </Body>
    </Screen>
  );
}
